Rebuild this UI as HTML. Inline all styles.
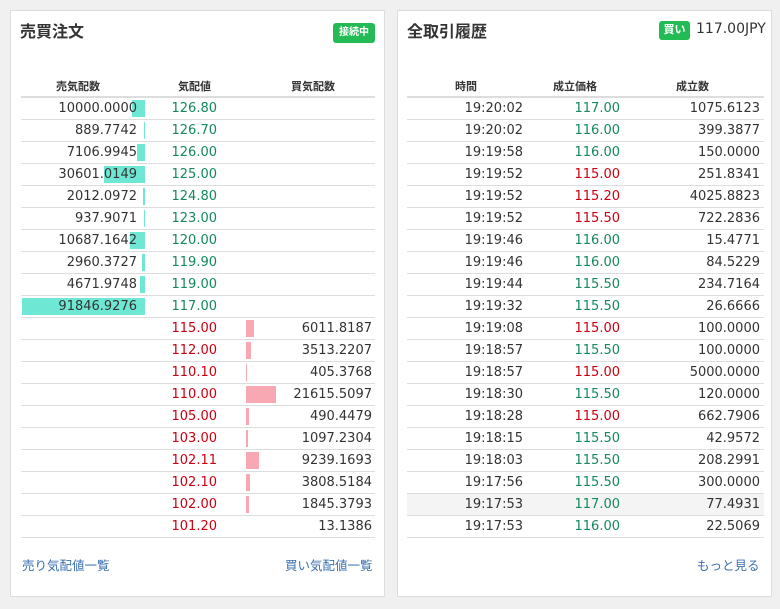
<!DOCTYPE html>
<html><head><meta charset="utf-8"><style>
body{margin:0;width:780px;height:609px;background:#f0f0f0;font-family:"DejaVu Sans","Liberation Sans","Noto Sans CJK JP",sans-serif;position:relative;overflow:hidden;color:#333}
.p{position:absolute;top:10px;width:375px;height:587px;background:#fff;border:1px solid #ddd;box-sizing:border-box}
.t{position:absolute;font-size:16px;font-weight:bold;color:#333;font-family:"Liberation Sans","Noto Sans CJK JP",sans-serif}
.b{position:absolute;background:#22bb55;color:#fff;font-size:10px;font-weight:bold;border-radius:3px;text-align:center;font-family:"Liberation Sans","Noto Sans CJK JP",sans-serif}
.h{position:absolute;font-size:11px;font-weight:bold;top:78px;font-family:"Liberation Sans","Noto Sans CJK JP",sans-serif}
.r{position:absolute;height:22px;border-bottom:1px solid #ddd;box-sizing:border-box;font-size:13px;line-height:21px}
.r span{position:absolute;white-space:nowrap}
.g{color:#148a5c}.d{color:#cc0011}
.ab{position:absolute;top:2px;height:17px;background:#6ee8d4}
.bb{position:absolute;top:2px;height:17px;background:#f8a8b2}
a{position:absolute;color:#3a6fb0;font-size:12.5px;text-decoration:none;font-family:"Liberation Sans","Noto Sans CJK JP",sans-serif}
</style></head><body>
<div class="p" style="left:10px"></div>
<div class="p" style="left:397px"></div>
<div class="t" style="left:20px;top:18px">売買注文</div>
<div class="b" style="left:333px;top:23px;width:42px;height:20px;line-height:20px">接続中</div>
<div class="t" style="left:407px;top:18px">全取引履歴</div>
<div class="b" style="left:659px;top:21px;width:31px;height:19px;line-height:19px;font-size:11px">買い</div>
<div style="position:absolute;left:696px;top:21px;font-size:14px;font-family:'DejaVu Sans',sans-serif">117.00JPY</div>
<div class="h" style="left:56px">売気配数</div>
<div class="h" style="left:178px">気配値</div>
<div class="h" style="left:291px">買気配数</div>
<div class="h" style="left:455px">時間</div>
<div class="h" style="left:553px">成立価格</div>
<div class="h" style="left:676px">成立数</div>
<div style="position:absolute;left:21px;top:96px;width:354px;height:2px;background:#ddd"></div>
<div style="position:absolute;left:407px;top:96px;width:357px;height:2px;background:#ddd"></div>
<div id="L"></div><div id="R"></div>
<a style="left:22px;top:555px">売り気配値一覧</a>
<a style="left:285px;top:555px">買い気配値一覧</a>
<a style="left:697px;top:555px">もっと見る</a>
<script>
var L=[["10000.0000","126.80",13],["889.7742","126.70",1],["7106.9945","126.00",8],["30601.0149","125.00",41],["2012.0972","124.80",2],["937.9071","123.00",1],["10687.1642","120.00",15],["2960.3727","119.90",3],["4671.9748","119.00",5],["91846.9276","117.00",123],
[0,"115.00",8,"6011.8187"],[0,"112.00",5,"3513.2207"],[0,"110.10",1,"405.3768"],[0,"110.00",30,"21615.5097"],[0,"105.00",3,"490.4479"],[0,"103.00",2,"1097.2304"],[0,"102.11",13,"9239.1693"],[0,"102.10",4,"3808.5184"],[0,"102.00",3,"1845.3793"],[0,"101.20",0,"13.1386"]];
var h="";
L.forEach(function(r,i){var y=98+i*22;h+='<div class="r" style="left:21px;top:'+y+'px;width:354px">';
if(r[0]){h+='<div class="ab" style="left:'+(124-r[2])+'px;width:'+r[2]+'px"></div><span style="right:238px">'+r[0]+'</span><span class="g" style="right:158px">'+r[1]+'</span>';}
else{if(r[2])h+='<div class="bb" style="left:225px;width:'+r[2]+'px"></div>';h+='<span class="d" style="right:158px">'+r[1]+'</span><span style="right:3px">'+r[3]+'</span>';}
h+='</div>';});
document.getElementById("L").innerHTML=h;
var R=[["19:20:02","117.00","1075.6123",1],["19:20:02","116.00","399.3877",1],["19:19:58","116.00","150.0000",1],["19:19:52","115.00","251.8341",0],["19:19:52","115.20","4025.8823",0],["19:19:52","115.50","722.2836",0],["19:19:46","116.00","15.4771",1],["19:19:46","116.00","84.5229",1],["19:19:44","115.50","234.7164",1],["19:19:32","115.50","26.6666",1],["19:19:08","115.00","100.0000",0],["19:18:57","115.50","100.0000",1],["19:18:57","115.00","5000.0000",0],["19:18:30","115.50","120.0000",1],["19:18:28","115.00","662.7906",0],["19:18:15","115.50","42.9572",1],["19:18:03","115.50","208.2991",1],["19:17:56","115.50","300.0000",1],["19:17:53","117.00","77.4931",1],["19:17:53","116.00","22.5069",1]];
h="";
R.forEach(function(r,i){var y=98+i*22;h+='<div class="r" style="left:407px;top:'+y+'px;width:357px;'+(i==18?'background:#f4f4f4':'')+'"><span style="right:241px">'+r[0]+'</span><span class="'+(r[3]?'g':'d')+'" style="right:144px">'+r[1]+'</span><span style="right:4px">'+r[2]+'</span></div>';});
document.getElementById("R").innerHTML=h;
</script>
</body></html>
